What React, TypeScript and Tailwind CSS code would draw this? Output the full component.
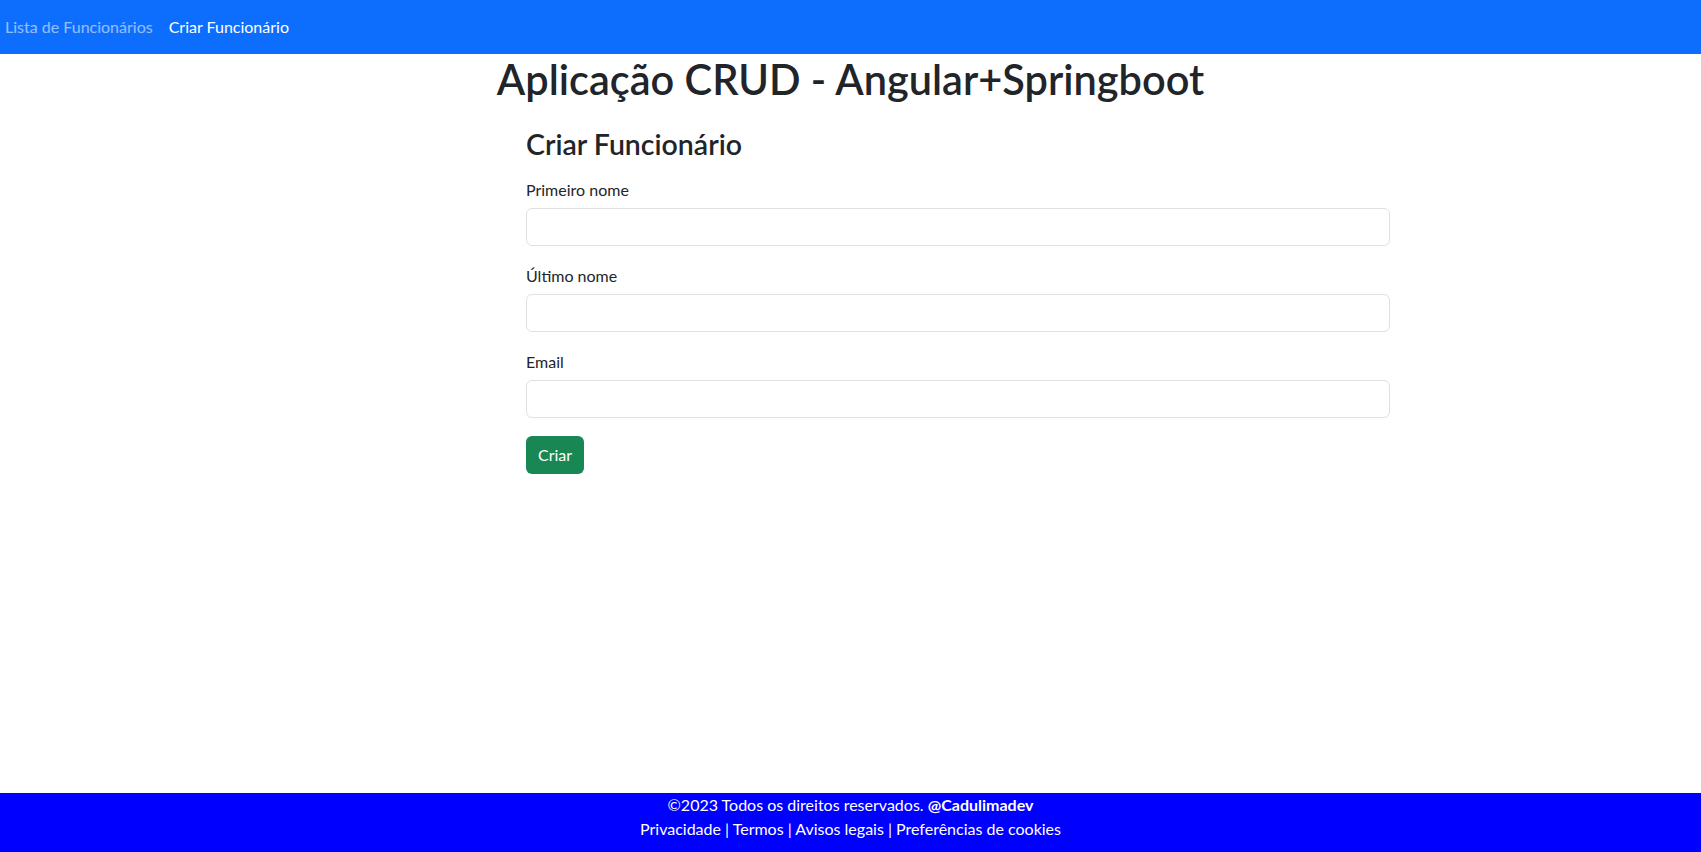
import React from "react";

export default function App() {
  const font = { fontFamily: '"Lato", "Noto Sans", sans-serif' };
  return (
    <div className="min-h-screen flex flex-col bg-white text-[#212529]" style={font}>
      <nav className="h-[54px] bg-[#0d6efd] flex items-center px-[5px]">
        <a className="text-[16px] leading-6 text-white/55 pr-2">Lista de Funcionários</a>
        <a className="text-[16px] leading-6 text-white px-2">Criar Funcionário</a>
      </nav>

      <main className="flex-1 flex flex-col">
        <h1 className="text-center text-[41.5px] leading-[48px] font-semibold mt-[1px]">
          Aplicação CRUD - Angular+Springboot
        </h1>
        <div className="ml-[526px] w-[864px] mt-[24px]">
          <h3 className="text-[28.5px] leading-[34px] font-semibold mb-[17px]">Criar Funcionário</h3>
          <form className="flex flex-col">
            <div className="mb-[18px]">
              <label className="block text-[16px] leading-6 mb-[6px]">Primeiro nome</label>
              <input
                type="text"
                className="block w-full h-[38px] rounded-[6px] border border-[#dee2e6] px-3 outline-none"
              />
            </div>
            <div className="mb-[18px]">
              <label className="block text-[16px] leading-6 mb-[6px]">Último nome</label>
              <input
                type="text"
                className="block w-full h-[38px] rounded-[6px] border border-[#dee2e6] px-3 outline-none"
              />
            </div>
            <div className="mb-[18px]">
              <label className="block text-[16px] leading-6 mb-[6px]">Email</label>
              <input
                type="email"
                className="block w-full h-[38px] rounded-[6px] border border-[#dee2e6] px-3 outline-none"
              />
            </div>
            <div>
              <button
                type="button"
                className="h-[38px] px-3 rounded-[6px] bg-[#198754] text-white text-[16px] leading-6"
              >
                Criar
              </button>
            </div>
          </form>
        </div>
      </main>

      <footer className="h-[59px] bg-[#0000ff] text-white text-center text-[16px] leading-6">
        <p>
          ©2023 Todos os direitos reservados. <strong className="font-bold">@Cadulimadev</strong>
        </p>
        <p>Privacidade | Termos | Avisos legais | Preferências de cookies</p>
      </footer>
    </div>
  );
}
